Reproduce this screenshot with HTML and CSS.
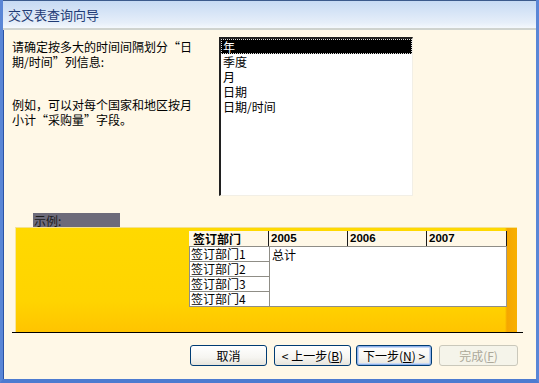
FILE: index.html
```html
<!DOCTYPE html>
<html lang="zh-CN">
<head>
<meta charset="utf-8">
<title>交叉表查询向导</title>
<link rel="stylesheet" href="styles.css">
</head>
<body>
<div class="window">
  <div class="titlebar"><span class="title">交叉表查询向导</span></div>
  <div class="content">
    <div class="top">
      <div class="desc">
        <p class="para">请确定按多大的时间间隔划分“日<br>期/时间”列信息:</p>
        <p class="para para2">例如，可以对每个国家和地区按月<br>小计“采购量”字段。</p>
      </div>
      <div class="listbox">
        <div class="item selected">年</div>
        <div class="item">季度</div>
        <div class="item">月</div>
        <div class="item">日期</div>
        <div class="item">日期/时间</div>
      </div>
    </div>
    <div class="sample">
      <div class="sample-label">示例:</div>
      <div class="panel">
        <div class="grid">
          <div class="hrow">
            <div class="hcell first">签订部门</div>
            <div class="hcell num">2005</div>
            <div class="hcell num">2006</div>
            <div class="hcell num last">2007</div>
          </div>
          <div class="brow">
            <div class="rowheads">
              <div class="rcell">签订部门1</div>
              <div class="rcell">签订部门2</div>
              <div class="rcell">签订部门3</div>
              <div class="rcell">签订部门4</div>
            </div>
            <div class="data">总计</div>
          </div>
        </div>
      </div>
    </div>
    <div class="rule"></div>
    <div class="buttons">
      <button class="btn b-cancel">取消</button>
      <button class="btn b-back">&lt; 上一步(<u>B</u>)</button>
      <button class="btn b-next default">下一步(<u>N</u>) &gt;</button>
      <button class="btn b-finish" disabled>完成(<u>F</u>)</button>
    </div>
  </div>
</div>
</body>
</html>
```

FILE: styles.css
```css
html, body {
  margin: 0;
  padding: 0;
  background: #fff8e7;
}

body {
  font-family: "Noto Sans CJK SC", "Noto Sans", sans-serif;
  font-size: 12px;
  color: #000;
}

.window {
  width: 539px;
  height: 383px;
  box-sizing: border-box;
  background: #fff8e7;
  border-left: 3px solid #5a86d6;
  border-right: 3px solid #5a86d6;
  border-bottom: 4px solid #4d7bd0;
  box-shadow: inset 1px 0 0 #2b53a6;
  display: flex;
  flex-direction: column;
  overflow: hidden;
}

.titlebar {
  margin-left: -3px;
  margin-right: -3px;
  padding-left: 8px;
  display: flex;
  align-items: center;
  background: linear-gradient(#c6daf3 0%, #d4e3f6 35%, #e6eef9 80%, #f4f8fc 100%);
  border-top: 1px solid #3b5a8c;
  border-bottom: 2px solid #cfd3cf;
  box-sizing: border-box;
  height: 30px;
  flex: none;
}

.title {
  font-size: 13px;
  line-height: 16px;
  color: #1f3b75;
  padding-top: 1px;
}

.content {
  flex: 1;
  display: flex;
  flex-direction: column;
}

.top {
  display: flex;
  padding-top: 7px;
}

.desc {
  width: 216px;
  flex: none;
  padding-left: 9px;
  box-sizing: border-box;
  padding-top: 2px;
}

.para {
  margin: 0;
  line-height: 15px;
}

.para2 {
  margin-top: 28px;
}

.listbox {
  width: 194px;
  height: 159px;
  flex: none;
  box-sizing: border-box;
  background: #fff;
  border-top: 2px solid #202020;
  border-left: 2px solid #202020;
  border-right: 1px solid #f2efe6;
  border-bottom: 1px solid #f2efe6;
}

.item {
  height: 15px;
  line-height: 15px;
  padding-left: 2px;
  white-space: nowrap;
}

.item.selected {
  background: #000;
  color: #fff;
  outline: 1px dotted #d8d8d8;
  outline-offset: -1px;
}

.sample {
  margin-top: 17px;
  margin-left: 12px;
  width: 502px;
}

.sample-label {
  width: 87px;
  height: 15px;
  line-height: 15px;
  margin-left: 18px;
  background: #6d6b7a;
  color: #1c1c1c;
  box-sizing: border-box;
  padding-left: 1px;
}

.panel {
  height: 105px;
  box-sizing: border-box;
  padding-top: 3px;
  padding-left: 173px;
  border-left: 1px solid #f6e6a2;
  border-top: 1px solid #f3e190;
  background:
    linear-gradient(90deg, rgba(0,0,0,0) 0%, rgba(0,0,0,0) 97.6%, #f5a600 98%, #f8b000 100%),
    linear-gradient(180deg, #ffd900 0%, #ffd400 70%, #ffc400 100%);
  margin-top: -1px;
}

.grid {
  width: 318px;
  display: flex;
  flex-direction: column;
}

.hrow {
  display: flex;
  height: 16px;
  background: #fff8e7;
  border-bottom: 1px solid #8f8d86;
  box-sizing: border-box;
}

.hcell {
  height: 15px;
  line-height: 15px;
  font-weight: bold;
  box-sizing: border-box;
  border-right: 1px solid #1a1a1a;
  padding-left: 2px;
  white-space: nowrap;
}

.hcell.first {
  width: 80px;
  padding-left: 4px;
}

.hcell.num {
  width: 79px;
  font-family: "Liberation Sans", Arial, sans-serif;
  font-size: 11.5px;
}

.hcell.last {
  width: 80px;
}

.brow {
  display: flex;
  height: 60px;
}

.rowheads {
  width: 80px;
  display: flex;
  flex-direction: column;
  background: #fff;
  border-left: 1px solid #8f8d86;
  box-sizing: border-box;
}

.rcell {
  height: 15px;
  line-height: 14px;
  box-sizing: border-box;
  border-bottom: 1px solid #8f8d86;
  padding-left: 1px;
  white-space: nowrap;
}

.data {
  flex: 1;
  background: #fff;
  border-left: 1px solid #8f8d86;
  border-right: 1px solid #9a988f;
  border-bottom: 1px solid #8f8d86;
  line-height: 15px;
  padding-left: 2px;
}

.rule {
  margin-left: 9px;
  width: 511px;
  height: 1px;
  background: #000;
}

.buttons {
  display: flex;
  margin-top: 12px;
  margin-left: 187px;
}

.btn {
  height: 21px;
  box-sizing: border-box;
  border: 1px solid #003c74;
  border-radius: 3px;
  background: linear-gradient(#ffffff 0%, #f6f5f1 60%, #e6e4dc 100%);
  font-family: "Noto Sans CJK SC", sans-serif;
  font-size: 12px;
  line-height: 17px;
  padding: 0;
  color: #000;
}

.b-cancel { width: 77px; }
.b-back { width: 77px; margin-left: 7px; }
.b-next { width: 76px; margin-left: 5px; }
.b-finish { width: 79px; margin-left: 7px; }

.btn.default {
  box-shadow: inset 0 0 0 1px #8fb2ea, inset 0 0 0 2px #c7d8f5;
}

.btn:disabled {
  border-color: #cac8bb;
  background: #f5f4ea;
  color: #aca899;
}
```
